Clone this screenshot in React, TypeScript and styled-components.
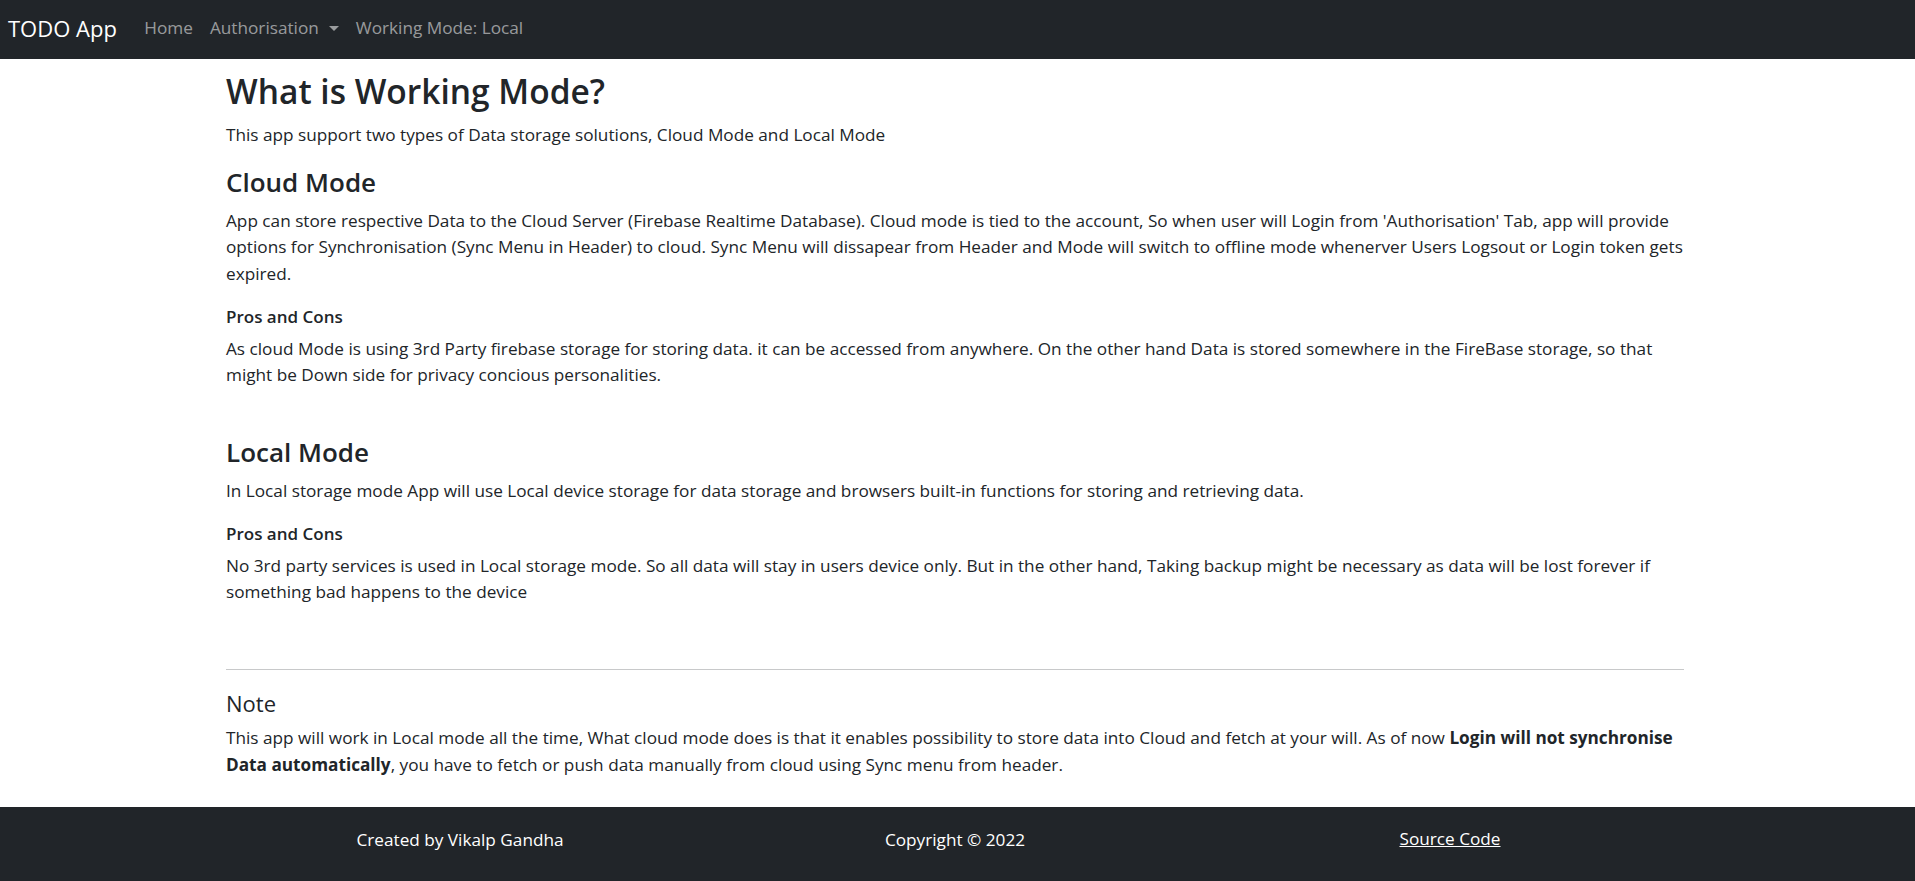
import React from "react";
import styled, { createGlobalStyle } from "styled-components";

const GlobalStyle = createGlobalStyle`
  * { box-sizing: border-box; }
  html, body { margin: 0; padding: 0; background: #fff; }
  body {
    font-family: "Open Sans", "Noto Sans", "Liberation Sans", sans-serif;
    color: #212529;
    font-size: 17.2px;
    line-height: 26.4px;
  }
`;

const Page = styled.div`
  display: flex;
  flex-direction: column;
  min-height: 881px;
`;

const NavBar = styled.nav`
  height: 59px;
  background: #212529;
  display: flex;
  align-items: center;
  padding: 0 8px 3px;
`;

const Brand = styled.a`
  color: #fff;
  font-size: 22px;
  line-height: 30px;
  margin-right: 19px;
  text-decoration: none;
`;

const NavLink = styled.a`
  color: rgba(255, 255, 255, 0.55);
  font-size: 17.2px;
  padding: 0 8.5px;
  text-decoration: none;
  display: inline-flex;
  align-items: center;
`;

const Caret = styled.span`
  display: inline-block;
  margin-left: 10px;
  border-top: 5px solid rgba(255, 255, 255, 0.55);
  border-left: 5px solid transparent;
  border-right: 5px solid transparent;
`;

const Main = styled.main`
  flex: 1;
  width: 1485px;
  margin: 0 auto;
  padding: 10px 16px 0 11px;
`;

const Title = styled.h1`
  font-size: 33.5px;
  font-weight: 600;
  line-height: 45px;
  margin: 0 0 7.5px;
`;

const Text = styled.p`
  margin: 0;
`;

const SectionTitle = styled.h3<{ $top: number }>`
  font-size: 26px;
  font-weight: 600;
  line-height: 32px;
  margin: ${(p) => p.$top}px 0 9.5px;
`;

const SubTitle = styled.h6`
  font-size: 17px;
  font-weight: 600;
  line-height: 21px;
  margin: 18.5px 0 9.3px;
`;

const Rule = styled.hr`
  border: 0;
  border-top: 1px solid #c8c9ca;
  margin: 63px 0 0;
`;

const NoteTitle = styled.h5`
  font-size: 22px;
  font-weight: 500;
  line-height: 28px;
  margin: 19px 0 8.5px;
`;

const Footer = styled.footer`
  height: 74px;
  background: #212529;
  color: #fff;
  display: flex;
  justify-content: center;
  align-items: center;
  padding-bottom: 7px;
`;

const FooterRow = styled.div`
  width: 1490px;
  padding-right: 5px;
  display: grid;
  grid-template-columns: repeat(3, 1fr);
  text-align: center;
`;

const FooterItem = styled.div`
  font-size: 17.2px;
`;

const FooterLink = styled.a`
  color: #fff;
  text-decoration: underline;
  font-size: 17.2px;
  position: relative;
  top: -1px;
`;

export default function App() {
  return (
    <>
      <GlobalStyle />
      <Page>
        <NavBar>
          <Brand href="#">TODO App</Brand>
          <NavLink href="#">Home</NavLink>
          <NavLink href="#">
            Authorisation
            <Caret />
          </NavLink>
          <NavLink href="#">Working Mode: Local</NavLink>
        </NavBar>
        <Main>
          <Title>What is Working Mode?</Title>
          <Text>
            This app support two types of Data storage solutions, Cloud Mode and Local Mode
          </Text>
          <SectionTitle $top={18.5}>Cloud Mode</SectionTitle>
          <Text>
            App can store respective Data to the Cloud Server (Firebase Realtime Database). Cloud
            mode is tied to the account, So when user will Login from 'Authorisation' Tab, app will
            provide options for Synchronisation (Sync Menu in Header) to cloud. Sync Menu will
            dissapear from Header and Mode will switch to offline mode whenerver Users Logsout or
            Login token gets expired.
          </Text>
          <SubTitle>Pros and Cons</SubTitle>
          <Text>
            As cloud Mode is using 3rd Party firebase storage for storing data. it can be accessed
            from anywhere. On the other hand Data is stored somewhere in the FireBase storage, so
            that might be Down side for privacy concious personalities.
          </Text>
          <SectionTitle $top={47.5}>Local Mode</SectionTitle>
          <Text>
            In Local storage mode App will use Local device storage for data storage and browsers
            built-in functions for storing and retrieving data.
          </Text>
          <SubTitle>Pros and Cons</SubTitle>
          <Text>
            No 3rd party services is used in Local storage mode. So all data will stay in users
            device only. But in the other hand, Taking backup might be necessary as data will be
            lost forever if something bad happens to the device
          </Text>
          <Rule />
          <NoteTitle>Note</NoteTitle>
          <Text>
            This app will work in Local mode all the time, What cloud mode does is that it enables
            possibility to store data into Cloud and fetch at your will. As of now{" "}
            <b>Login will not synchronise Data automatically</b>, you have to fetch or push data
            manually from cloud using Sync menu from header.
          </Text>
        </Main>
        <Footer>
          <FooterRow>
            <FooterItem>Created by Vikalp Gandha</FooterItem>
            <FooterItem>Copyright © 2022</FooterItem>
            <FooterItem>
              <FooterLink href="#">Source Code</FooterLink>
            </FooterItem>
          </FooterRow>
        </Footer>
      </Page>
    </>
  );
}
